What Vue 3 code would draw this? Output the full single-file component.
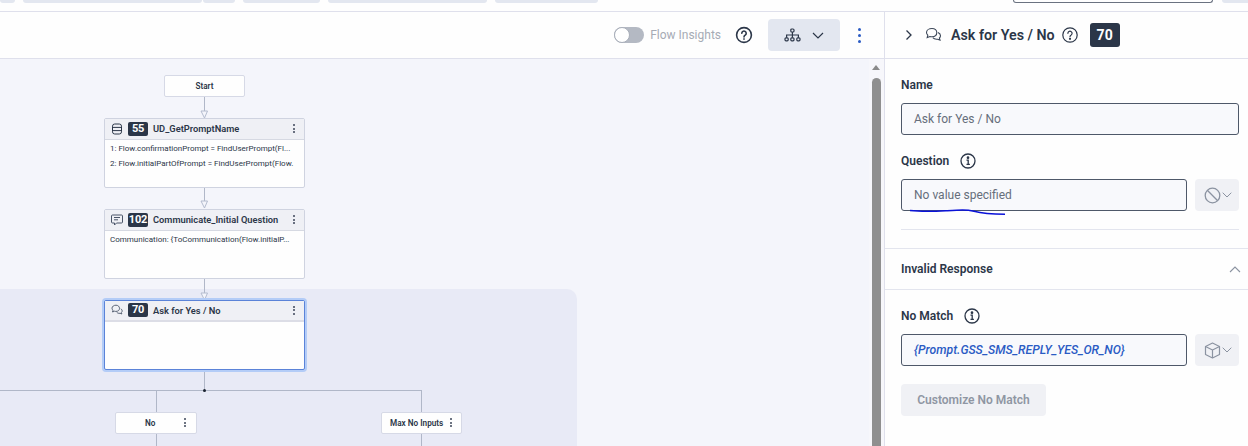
<script setup>
const tabs = [
  { w: 15, ml: 0 }, { w: 179, ml: 8 }, { w: 32, ml: 1 }, { w: 77, ml: 8 }, { w: 159, ml: 8 }, { w: 103, ml: 8 }
]
</script>

<template>
  <div class="page">
    <div class="strip">
      <span v-for="(t, i) in tabs" :key="i" class="tab" :style="{ width: t.w + 'px', marginLeft: t.ml + 'px' }"></span>
      <span class="strip-input"></span>
      <span class="strip-btn"></span>
    </div>
    <div class="main">
      <div class="left">
        <div class="toolbar">
          <span class="toggle"><span class="knob"></span></span>
          <span class="insights">Flow Insights</span>
          <svg class="help" width="18" height="18" viewBox="0 0 18 18" fill="none" stroke="#2b3648" stroke-width="1.6"><circle cx="9" cy="9" r="7.4"/><path d="M6.800 7.200a2.200 2.200 0 1 1 3.400 1.900c-.8.500-1.200.9-1.200 1.800" stroke-linecap="round"/><circle cx="9" cy="13" r=".6" fill="#2b3648" stroke-width=".6"/></svg>
          <button class="layout-btn">
            <svg width="17" height="14" viewBox="0 0 17 14" fill="none" stroke="#2b3648" stroke-width="1.2"><rect x="6.800" y="1" width="3.200" height="3" rx="1"/><rect x="1" y="9.800" width="3.200" height="3" rx="1"/><rect x="6.800" y="9.800" width="3.200" height="3" rx="1"/><rect x="12.800" y="9.800" width="3.200" height="3" rx="1"/><path d="M8.400 4v5.800M2.600 9.800V7h11.800v2.800"/></svg>
            <svg width="12" height="7" viewBox="0 0 12 7" fill="none" stroke="#2b3648" stroke-width="1.2"><path d="M1 1l5 5 5-5"/></svg>
          </button>
          <span class="kebab blue"><i></i><i></i><i></i></span>
        </div>
        <div class="canvas">
          <div class="group"></div>

          <span class="line v" style="left:204px;top:38px;height:16px"></span>
          <svg class="arrow" style="left:200px;top:51px" width="9" height="9" viewBox="0 0 9 9"><path d="M1 1h6.500L4.500 8z" fill="#f4f5fb" stroke="#b4bccf"/></svg>
          <span class="line v" style="left:204px;top:129px;height:18px"></span>
          <svg class="arrow" style="left:200px;top:141px" width="9" height="9" viewBox="0 0 9 9"><path d="M1 1h6.500L4.500 8z" fill="#f4f5fb" stroke="#b4bccf"/></svg>
          <span class="line v" style="left:204px;top:219px;height:16px"></span>
          <svg class="arrow" style="left:200px;top:233px" width="9" height="9" viewBox="0 0 9 9"><path d="M1 1h6.500L4.500 8z" fill="#f4f5fb" stroke="#b4bccf"/></svg>
          <span class="line v" style="left:204px;top:311px;height:20px"></span>
          <span class="line h" style="left:0;top:331px;width:422px"></span>
          <span class="dot"></span>
          <span class="line v" style="left:156px;top:331px;height:22px"></span>
          <span class="line v" style="left:421px;top:331px;height:22px"></span>
          <span class="line v" style="left:156px;top:374px;height:13px"></span>
          <span class="line v" style="left:421px;top:374px;height:13px"></span>

          <div class="pill start" style="left:164px;top:16px;width:81px"><span class="pill-text">Start</span></div>

          <div class="node" style="top:59px;height:70px">
            <div class="node-head">
              <svg class="nicon" width="12" height="12" viewBox="0 0 12 12" fill="none" stroke="#2b3648" stroke-width="1"><rect x="1.500" y="1" width="9" height="10" rx="2.200"/><path d="M1.500 4.400h9M1.500 7.600h9"/></svg>
              <span class="badge">55</span>
              <span class="node-title">UD_GetPromptName</span>
              <span class="kebab small"><i></i><i></i><i></i></span>
            </div>
            <div class="node-body">
              <div>1: Flow.confirmationPrompt = FindUserPrompt(Fl...</div>
              <div>2: Flow.initialPartOfPrompt = FindUserPrompt(Flow.</div>
            </div>
          </div>

          <div class="node" style="top:150px;height:70px">
            <div class="node-head">
              <svg class="nicon" width="12" height="12" viewBox="0 0 12 12" fill="none" stroke="#4a5568" stroke-width="1"><path d="M1.500 1h9a1 1 0 0 1 1 1v6a1 1 0 0 1-1 1H5.500L3.500 11V9h-2a1 1 0 0 1-1-1V2a1 1 0 0 1 1-1z"/><path d="M3 3.500h6M3 5.800h4"/></svg>
              <span class="badge">102</span>
              <span class="node-title">Communicate_Initial Question</span>
              <span class="kebab small"><i></i><i></i><i></i></span>
            </div>
            <div class="node-body">
              <div>Communication: {ToCommunication(Flow.initialP...</div>
            </div>
          </div>

          <div class="node selected" style="top:241px;height:70px">
            <div class="node-head">
              <svg class="nicon" width="12" height="12" viewBox="0 0 12 12" fill="none" stroke="#4a5568" stroke-width=".9"><path d="M5 1.200c-2.200 0-4 1.300-4 3 0 .8.400 1.500 1 2L1.500 8l2-.8c.5.200 1 .2 1.500.2 2.200 0 3.500-1.300 3.500-3s-1.300-3.200-3.500-3.200z"/><path d="M9.800 4.800c.9.500 1.400 1.200 1.400 2.100 0 .7-.3 1.200-.8 1.600l.4 1.500-1.700-.7c-1.400.2-2.700-.2-3.400-1.100"/></svg>
              <span class="badge">70</span>
              <span class="node-title">Ask for Yes / No</span>
              <span class="kebab small"><i></i><i></i><i></i></span>
            </div>
          </div>

          <div class="pill" style="left:115px;top:353px;width:82px">
            <span class="pill-text no">No</span>
            <span class="kebab tiny"><i></i><i></i><i></i></span>
          </div>
          <div class="pill" style="left:381px;top:353px;width:81px">
            <span class="pill-text max">Max No Inputs</span>
            <span class="kebab tiny"><i></i><i></i><i></i></span>
          </div>

          <div class="scrollbar">
            <span class="sb-arrow"></span>
            <span class="sb-thumb"></span>
          </div>
        </div>
      </div>

      <aside class="panel">
        <div class="panel-head">
          <svg width="8" height="12" viewBox="0 0 8 12" fill="none" stroke="#2b3648" stroke-width="1.300"><path d="M1.500 1.500L6 6l-4.500 4.500"/></svg>
          <svg class="chat" width="17" height="15" viewBox="0 0 17 15" fill="none" stroke="#3d4859" stroke-width="1.100"><path d="M7 1.500c-3 0-5.500 1.700-5.500 4 0 1 .5 1.900 1.300 2.600L2.200 10.500l2.700-1c.7.200 1.400.3 2.100.3 3 0 4.800-1.900 4.800-4.200S10 1.500 7 1.500z"/><path d="M13 5.500c1.500.7 2.500 1.900 2.500 3.200 0 .9-.4 1.700-1.100 2.300l.6 2.100-2.400-.9c-2 .3-3.800-.3-4.800-1.500"/></svg>
          <span class="panel-title">Ask for Yes / No</span>
          <svg class="ph-help" width="16" height="16" viewBox="0 0 16 16" fill="none" stroke="#2b3648" stroke-width="1.200"><circle cx="8" cy="8" r="7.200"/><path d="M5.900 6.300a2.100 2.100 0 1 1 3.300 1.700c-.8.500-1.200.9-1.200 1.700" stroke-linecap="round"/><circle cx="8" cy="11.800" r=".5" fill="#2b3648"/></svg>
          <span class="head-badge">70</span>
        </div>

        <div class="section-a">
          <label class="label">Name</label>
          <div class="input wide">Ask for Yes / No</div>

          <div class="label-row">
            <label class="label">Question</label>
            <svg width="16" height="16" viewBox="0 0 16 16" fill="none" stroke="#2b3648" stroke-width="1.300"><circle cx="8" cy="8" r="7"/><path d="M6.500 7.200H8.200v4M6.500 11.400h3.400" /><circle cx="8" cy="4.700" r=".7" fill="#2b3648"/></svg>
          </div>
          <div class="field-row">
            <div class="input">No value specified</div>
            <button class="mini-btn">
              <svg width="17" height="17" viewBox="0 0 17 17" fill="none" stroke="#8b93a1" stroke-width="1.300"><circle cx="8.500" cy="8.500" r="7.300"/><path d="M3.300 3.300l10.400 10.400"/></svg>
              <svg width="10" height="6" viewBox="0 0 10 6" fill="none" stroke="#8b93a1" stroke-width="1"><path d="M.7.700L5 5 9.300.7"/></svg>
            </button>
            <svg class="scribble" width="98" height="8" viewBox="0 0 98 8" fill="none" stroke="#0a12d8" stroke-width="1.500"><path d="M1 2.500c10 1.200 22 1 36 .3 14-1 20-1.500 28 .5 9 2.500 15 3 31 3"/></svg>
          </div>
          <div class="rule"></div>
        </div>

        <div class="acc-head">
          <span class="label">Invalid Response</span>
          <svg width="12" height="7" viewBox="0 0 12 7" fill="none" stroke="#8b93a1" stroke-width="1.100"><path d="M1 6l5-5 5 5"/></svg>
        </div>

        <div class="section-b">
          <div class="label-row first">
            <label class="label">No Match</label>
            <svg width="16" height="16" viewBox="0 0 16 16" fill="none" stroke="#2b3648" stroke-width="1.300"><circle cx="8" cy="8" r="7"/><path d="M6.500 7.200H8.200v4M6.500 11.400h3.400" /><circle cx="8" cy="4.700" r=".7" fill="#2b3648"/></svg>
          </div>
          <div class="field-row">
            <div class="input expr">{Prompt.GSS_SMS_REPLY_YES_OR_NO}</div>
            <button class="mini-btn">
              <svg width="17" height="17" viewBox="0 0 17 17" fill="none" stroke="#8b93a1" stroke-width="1.200" stroke-linejoin="round"><path d="M8.500 1L15.500 4.500v8L8.500 16l-7-3.500v-8z"/><path d="M1.500 4.500l7 3.500 7-3.500M8.500 8v8"/></svg>
              <svg width="10" height="6" viewBox="0 0 10 6" fill="none" stroke="#8b93a1" stroke-width="1"><path d="M.7.700L5 5 9.300.7"/></svg>
            </button>
          </div>
          <button class="customize">Customize No Match</button>
        </div>
      </aside>
    </div>
  </div>
</template>

<style>
html, body { margin: 0; background: #fff; overflow: hidden; }
</style>

<style scoped>
.page { width: 1248px; height: 446px; overflow: hidden; font-family: Roboto, "Noto Sans", sans-serif; color: #2b3648; background: #fefefe; display: flex; flex-direction: column; }
.strip { height: 11px; display: flex; border-bottom: 1px solid #dfe0ec; flex: none; box-sizing: content-box; }
.tab { height: 3px; background: #e3e7f0; border-radius: 0 0 5px 5px; }
.strip-input { width: 198px; height: 2px; margin-left: 415px; border: 1px solid #6a7280; border-top: 0; border-radius: 0 0 3px 3px; }
.strip-btn { flex: 1; height: 3px; margin-left: 9px; background: #e3e7f0; border-radius: 0 0 0 5px; }
.main { display: flex; flex: 1; min-height: 0; }
.left { display: flex; flex-direction: column; border-right: 1px solid #dfe0ec; flex: none; box-sizing: border-box; width: 885px; }
.toolbar { height: 47px; box-sizing: border-box; border-bottom: 1px solid #dfe0ec; display: flex; align-items: center; justify-content: flex-end; padding-right: 23px; flex: none; }
.toggle { width: 30px; height: 16px; border-radius: 8px; background: #b4b9c3; position: relative; margin-right: 6px; }
.knob { position: absolute; left: 0; top: 0; width: 14px; height: 14px; border-radius: 50%; background: #fff; border: 1px solid #a8aeb9; }
.insights { font-size: 12px; color: #a6abb5; margin-right: 14px; white-space: nowrap; }
.help { margin-right: 15px; }
.layout-btn { width: 72px; height: 32px; border: 0; border-radius: 4px; background: #e3e7f0; display: flex; align-items: center; justify-content: center; gap: 11px; padding: 0; margin-right: 18px; }
.kebab { display: inline-flex; flex-direction: column; align-items: center; gap: 2px; }
.kebab i { width: 2px; height: 2px; border-radius: 50%; background: #3c4658; }
.kebab.blue { gap: 3px; }
.kebab.blue i { width: 3px; height: 3px; background: #2a5bc4; }
.canvas { position: relative; flex: 1; background: #f4f5fb; overflow: hidden; }
.group { position: absolute; left: -10px; top: 230px; width: 587px; height: 300px; background: #e8eaf6; border-radius: 10px; }
.line { position: absolute; background: #b0b7c8; }
.line.v { width: 1px; }
.line.h { height: 1px; }
.arrow { position: absolute; }
.dot { position: absolute; left: 203px; top: 330px; width: 3px; height: 3px; border-radius: 50%; background: #1a2230; }
.node { position: absolute; left: 104px; width: 201px; box-sizing: border-box; background: #fefefe; border: 1px solid #cfd3e0; border-radius: 2px; }
.node.selected { border: 1px solid #5b83d8; box-shadow: 0 0 0 2px #b3ccf7; }
.node-head { height: 21px; background: #eff0f5; border-bottom: 1px solid #d6d9e2; display: flex; align-items: center; padding: 0 9px 1px 6px; box-sizing: border-box; }
.node.selected .node-head { border-bottom: 2px solid #dcdde6; }
.nicon { flex: none; margin-right: 5px; }
.badge { background: #2b3648; color: #fff; font-size: 11px; font-weight: 700; width: 20px; height: 14px; line-height: 14px; text-align: center; border-radius: 2px; flex: none; letter-spacing: -0.2px; }
.node-title { margin-left: 5px; font-size: 9.300px; font-weight: 600; color: #2b3648; flex: 1; white-space: nowrap; }
.kebab.small { gap: 1.500px; }
.node-body { padding: 1px 5px 0; font-size: 8px; line-height: 15px; color: #2b3648; white-space: nowrap; }
.pill { position: absolute; height: 22px; box-sizing: border-box; background: #fefefe; border: 1px solid #d6d9e6; border-radius: 2px; display: flex; align-items: center; padding-bottom: 1px; }
.pill.start { justify-content: center; }
.pill-text { font-size: 8.200px; font-weight: 600; color: #2b3648; white-space: nowrap; }
.pill-text.no { margin-left: 29px; width: 34px; }
.pill-text.max { margin-left: 8px; width: 55px; }
.kebab.tiny { gap: 1.500px; margin-left: 5px; }
.scrollbar { position: absolute; right: 0; top: 0; bottom: 0; width: 15px; background: #f7f7fb; }
.sb-arrow { position: absolute; left: 3px; top: 6px; border-left: 4.500px solid transparent; border-right: 4.500px solid transparent; border-bottom: 5px solid #8a8a8a; }
.sb-thumb { position: absolute; left: 3px; top: 19px; width: 9px; height: 400px; border-radius: 5px; background: #8f8f8f; }
.panel { flex: 1; min-width: 0; display: flex; flex-direction: column; }
.panel-head { height: 47px; box-sizing: border-box; border-bottom: 1px solid #dfe0ec; display: flex; align-items: center; padding: 0 0 1px 20px; flex: none; }
.chat { margin-left: 12px; }
.panel-title { margin-left: 9px; font-size: 14.250px; font-weight: 600; color: #2b3648; white-space: nowrap; }
.ph-help { margin-left: 7px; }
.head-badge { margin-left: 12px; width: 30px; height: 24px; line-height: 24px; background: #2b3648; color: #fff; border-radius: 3px; text-align: center; font-size: 14px; font-weight: 700; }
.section-a { padding: 18px 9px 0 16px; }
.label { font-size: 12px; font-weight: 600; color: #2b3648; display: block; white-space: nowrap; line-height: 16px; }
.input { flex: 1; height: 32px; box-sizing: border-box; border: 1px solid #4e5869; border-radius: 3px; background: #f8f9fc; font-size: 12px; color: #666e7b; line-height: 30px; padding-left: 12px; white-space: nowrap; }
.input.wide { margin-top: 10px; }
.label-row { display: flex; align-items: center; gap: 11px; margin-top: 18px; height: 16px; }
.label-row.first { margin-top: 0; }
.field-row { display: flex; gap: 8px; margin-top: 10px; position: relative; }
.mini-btn { width: 44px; height: 32px; flex: none; padding: 0 0 0 1px; border: 0; border-radius: 4px; background: #f0f1f5; display: flex; align-items: center; justify-content: center; gap: 1px; }
.scribble { position: absolute; left: 8px; top: 29px; }
.rule { height: 1px; background: #e3e5ee; margin-top: 18px; }
.acc-head { margin-top: 18px; height: 42px; box-sizing: border-box; border-top: 1px solid #e3e5ee; border-bottom: 1px solid #e3e5ee; display: flex; align-items: center; justify-content: space-between; padding: 0 7px 0 16px; }
.section-b { padding: 18px 9px 0 16px; }
.input.expr { color: #2a5bc4; font-style: italic; font-weight: 500; font-size: 12.200px; }
.customize { margin-top: 18px; display: block; width: 145px; height: 32px; padding: 0; border: 0; border-radius: 4px; background: #f0f1f5; color: #8f96a3; font-family: inherit; font-size: 12px; font-weight: 600; }
</style>
